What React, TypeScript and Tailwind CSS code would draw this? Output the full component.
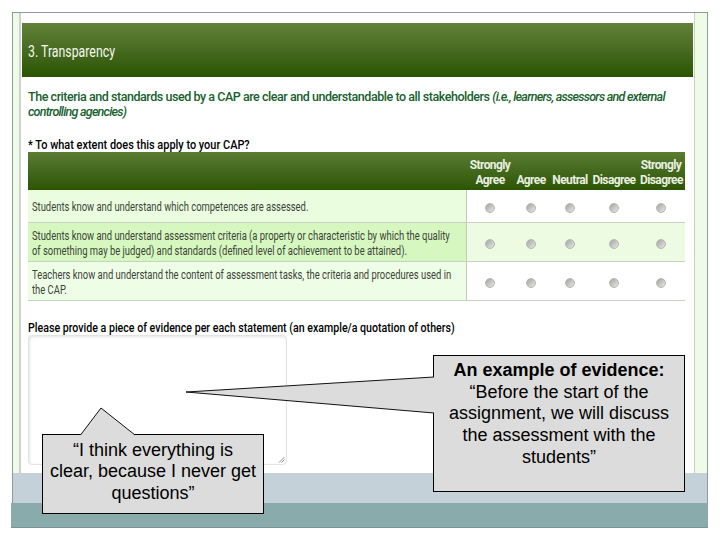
const rows = [
  {
    text: 'Students know and understand which competences are assessed.',
    height: 'h-[33px]',
    left: 'bg-[#eafddf]',
    right: 'bg-white',
  },
  {
    text: 'Students know and understand assessment criteria (a property or characteristic by which the quality of something may be judged) and standards (defined level of achievement to be attained).',
    height: 'h-[39px]',
    left: 'bg-[#d6f7c0]',
    right: 'bg-[#edfbe2]',
  },
  {
    text: 'Teachers know and understand the content of assessment tasks, the criteria and procedures used in the CAP.',
    height: 'h-[39px]',
    left: 'bg-[#eefde6]',
    right: 'bg-white',
  },
];

const columns = ['w-[46px]', 'w-[36px]', 'w-[42px]', 'w-[46px]', 'w-[48px]'];

function Radio() {
  return (
    <span className="block mt-[3px] w-[10px] h-[10px] rounded-full border border-[#b4b8b0] bg-gradient-to-br from-[#a4a6a2] to-[#e8e8e6]" />
  );
}

export default function App() {
  return (
    <div className="relative w-[720px] h-[540px] bg-white overflow-hidden font-['Roboto',sans-serif]">
      <div className="ml-[11px] pt-[12px] w-[697px] h-[540px] flex flex-col">
        <div className="flex-1 flex ml-[1px] border-t border-r border-l border-[#8c9c9c] min-h-0">
          <div className="w-[6px] bg-[#eefbe6]" />
          <div className="w-[2px] bg-[#cfd2cc]" />
          <div className="flex-1 bg-white pl-[1px] pt-[10px]">
            <div className="w-[671px] h-[54px] pl-[6px] flex items-center bg-gradient-to-b from-[#628239] to-[#2b5400]">
              <span className="block mt-[3px] origin-left scale-x-[.77] text-[16px] text-[#f4f7ee]">3. Transparency</span>
            </div>
            <div className="ml-[6px] mt-[12px] w-[660px] text-[12.5px] leading-[15px] font-medium text-[#17612c] tracking-[-0.45px]">
              The criteria and standards used by a CAP are clear and understandable to all stakeholders{' '}
              <em className="tracking-[-0.75px]">
                (i.e., learners, assessors and external
                <br />
                controlling agencies)
              </em>
            </div>
            <div className="ml-[6px] mt-[18px] h-[15px] w-[300px] origin-left scale-x-[.875] text-[12.5px] leading-[15px] font-medium text-black">
              * To what extent does this apply to your CAP?
            </div>
            <div className="ml-[6px] w-[657px]">
              <div className="flex h-[38px] bg-gradient-to-b from-[#5a7c33] to-[#2c5500] text-[#e9efe0] text-[12px] leading-[15px] font-bold tracking-[-0.6px]">
                <div className="w-[439px]" />
                {['Strongly Agree', 'Agree', 'Neutral', 'Disagree', 'Strongly Disagree'].map((label, i) => (
                  <div
                    key={label}
                    className={`${columns[i]} pb-[2px] flex items-end justify-center text-center`}
                  >
                    <span className={i === 0 || i === 4 ? 'w-[42px]' : ''}>{label}</span>
                  </div>
                ))}
              </div>
              {rows.map((row) => (
                <div key={row.text} className={`flex ${row.height} border-b border-[#c8d2c2]`}>
                  <div
                    className={`w-[439px] pl-[4px] pt-[3px] flex items-center text-[12px] leading-[15px] text-[#3c4438] border-r border-[#bfcdb4] ${row.left}`}
                  >
                    <span className="block shrink-0 w-[545px] origin-left scale-x-[.785]">{row.text}</span>
                  </div>
                  {columns.map((col) => (
                    <div key={col} className={`${col} flex items-center justify-center ${row.right}`}>
                      <Radio />
                    </div>
                  ))}
                </div>
              ))}
            </div>
            <div className="ml-[6px] mt-[19px] w-[520px] origin-left scale-x-[.85] text-[12.5px] leading-[15px] font-medium text-black">
              Please provide a piece of evidence per each statement (an example/a quotation of others)
            </div>
            <div className="relative ml-[6px] w-[259px] h-[130px] rounded-[4px] border border-[#e2e4e0] shadow-[inset_1px_1px_3px_#e4e4e4]">
              <svg className="absolute right-[1px] bottom-[1px]" width="7" height="7" viewBox="0 0 7 7">
                <path d="M1 6.5 6.5 1M3.5 6.5 6.5 3.5" stroke="#777" strokeWidth="0.8" fill="none" />
              </svg>
            </div>
          </div>
          <div className="w-[1px] bg-[#c9cfc4]" />
          <div className="w-[12px] bg-[#eefbe6]" />
        </div>
        <div className="h-[30px] ml-[1px] bg-[#c5d1d9] border-x border-[#8c9c9c]" />
        <div className="h-[25px] bg-[#8aabab] border-b border-[#7a9494]" />
        <div className="h-[12px]" />
      </div>

      {/* callout lower left */}
      <div className="absolute left-[42px] top-[434px] w-[222px] h-[80px] border border-black bg-[#dcdcdc] pt-[5px] text-center font-['Liberation_Sans',sans-serif] text-[18px] leading-[21.3px] text-black">
        <svg className="absolute left-[36px] top-[-28px]" width="60" height="29" viewBox="0 0 60 29">
          <path d="M1.5 28 22 1 56 28Z" fill="#dcdcdc" />
          <path d="M1.5 28 22 1 56 28" fill="none" stroke="#111" />
        </svg>
        “I think everything is
        <br />
        clear, because I never get
        <br />
        questions”
      </div>

      {/* callout right */}
      <div className="absolute left-[433px] top-[355px] w-[252px] h-[137px] border border-black bg-[#dcdcdc] pt-[4px] text-center font-['Liberation_Sans',sans-serif] text-[18px] leading-[21.7px] text-black">
        <svg className="absolute left-[-249px] top-[20px]" width="250" height="38" viewBox="0 0 250 38">
          <path d="M1 16 249 1V37Z" fill="#dcdcdc" />
          <path d="M249 1 1 16 249 37" fill="none" stroke="#111" />
        </svg>
        <strong>An example of evidence:</strong>
        <br />
        “Before the start of the
        <br />
        assignment, we will discuss
        <br />
        the assessment with the
        <br />
        students”
      </div>
    </div>
  );
}
